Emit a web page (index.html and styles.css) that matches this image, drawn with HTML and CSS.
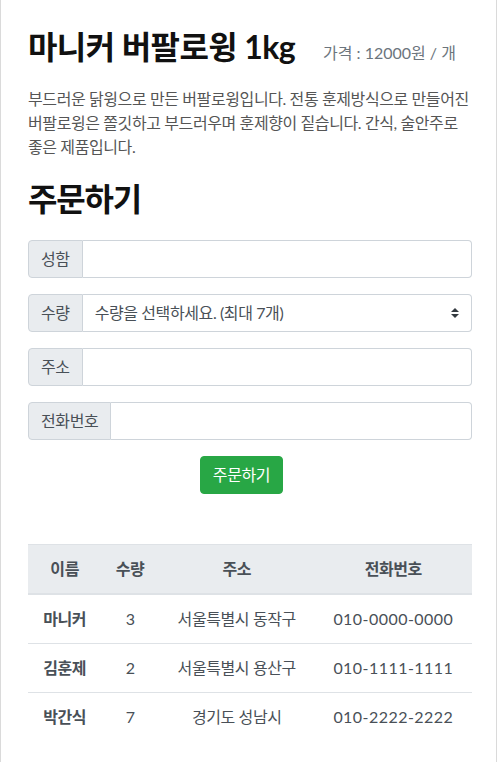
FILE: index.html
```html
<!DOCTYPE html>
<html lang="ko">
<head>
<meta charset="utf-8">
<title>마니커 버팔로윙 1kg</title>
<link rel="stylesheet" href="styles.css">
</head>
<body>
<div class="page">
  <div class="title-row">
    <h1 class="title">마니커 버팔로윙 1kg</h1>
    <span class="price">가격 : 12000원 / 개</span>
  </div>
  <p class="desc">부드러운 닭윙으로 만든 버팔로윙입니다. 전통 훈제방식으로 만들어진 버팔로윙은 쫄깃하고 부드러우며 훈제향이 짙습니다. 간식, 술안주로 좋은 제품입니다.</p>

  <h2 class="section-title">주문하기</h2>

  <form class="order-form">
    <div class="input-group">
      <span class="addon">성함</span>
      <input class="field" type="text">
    </div>
    <div class="input-group">
      <span class="addon">수량</span>
      <div class="select-wrap">
        <select class="field select">
          <option>수량을 선택하세요. (최대 7개)</option>
        </select>
        <svg class="select-arrow" width="8" height="10" viewBox="0 0 8 10"><path d="M4 0 L8 4 H0 Z M0 6 H8 L4 10 Z" fill="#343a40"/></svg>
      </div>
    </div>
    <div class="input-group">
      <span class="addon">주소</span>
      <input class="field" type="text">
    </div>
    <div class="input-group">
      <span class="addon">전화번호</span>
      <input class="field" type="text">
    </div>
    <div class="btn-row">
      <button class="btn" type="button">주문하기</button>
    </div>
  </form>

  <table class="orders">
    <thead>
      <tr><th>이름</th><th>수량</th><th>주소</th><th>전화번호</th></tr>
    </thead>
    <tbody>
      <tr><th>마니커</th><td>3</td><td>서울특별시 동작구</td><td class="phone">010-0000-0000</td></tr>
      <tr><th>김훈제</th><td>2</td><td>서울특별시 용산구</td><td class="phone">010-1111-1111</td></tr>
      <tr><th>박간식</th><td>7</td><td>경기도 성남시</td><td class="phone">010-2222-2222</td></tr>
    </tbody>
  </table>
</div>
</body>
</html>
```
FILE: styles.css
```css
* { box-sizing: border-box; }
html, body { margin: 0; padding: 0; background: #fff; }
body {
  font-family: Lato, "Noto Sans CJK KR", sans-serif;
  font-size: 16px;
  line-height: 1.5;
  color: #212529;
  letter-spacing: -0.4px;
}
.page {
  width: 497px;
  min-height: 762px;
  border-left: 1px solid #dadada;
  border-right: 1px solid #dadada;
  padding: 28px 24px 0 27px;
}
.title-row {
  display: flex;
  align-items: baseline;
  gap: 28px;
  margin-bottom: 21px;
}
.title {
  margin: 0;
  font-size: 32px;
  line-height: 1.2;
  font-weight: 700;
  color: #111;
  white-space: nowrap;
  letter-spacing: -0.6px;
}
.price {
  font-size: 16px;
  color: #6c757d;
  white-space: nowrap;
  letter-spacing: 0;
}
.desc {
  margin: 0 0 21px;
  color: #555;
}
.section-title {
  margin: 0 0 21px;
  font-size: 32px;
  line-height: 1.2;
  font-weight: 700;
  color: #111;
  letter-spacing: -1.2px;
}
.order-form { margin: 0 0 50px; }
.input-group {
  display: flex;
  height: 38px;
  margin-bottom: 16px;
}
.addon {
  display: flex;
  align-items: center;
  padding: 6px 12px;
  background: #e9ecef;
  border: 1px solid #ced4da;
  border-radius: 4px 0 0 4px;
  color: #495057;
  white-space: nowrap;
}
.field {
  flex: 1;
  min-width: 0;
  height: 38px;
  margin: 0;
  padding: 6px 12px;
  border: 1px solid #ced4da;
  border-left: 0;
  border-radius: 0 4px 4px 0;
  font: inherit;
  letter-spacing: inherit;
  color: #495057;
  background: #fff;
  outline: none;
}
.select-wrap {
  position: relative;
  flex: 1;
  display: flex;
}
.select {
  -webkit-appearance: none;
  appearance: none;
  width: 100%;
}
.select-arrow {
  position: absolute;
  right: 13px;
  top: 14px;
  pointer-events: none;
}
.btn-row {
  display: flex;
  justify-content: center;
  padding-right: 17px;
}
.btn {
  height: 38px;
  padding: 6px 12px;
  font: inherit;
  letter-spacing: inherit;
  color: #fff;
  background: #28a745;
  border: 1px solid #28a745;
  border-radius: 4px;
}
.orders {
  width: 100%;
  border-collapse: collapse;
  color: #495057;
  text-align: center;
}
.orders th, .orders td {
  padding: 12px;
  border-top: 1px solid #dee2e6;
  font-weight: 400;
}
.orders th { font-weight: 700; }
.orders thead th {
  background: #e9ecef;
  border-bottom: 2px solid #dee2e6;
}
.orders .phone { letter-spacing: 0.45px; }
```
